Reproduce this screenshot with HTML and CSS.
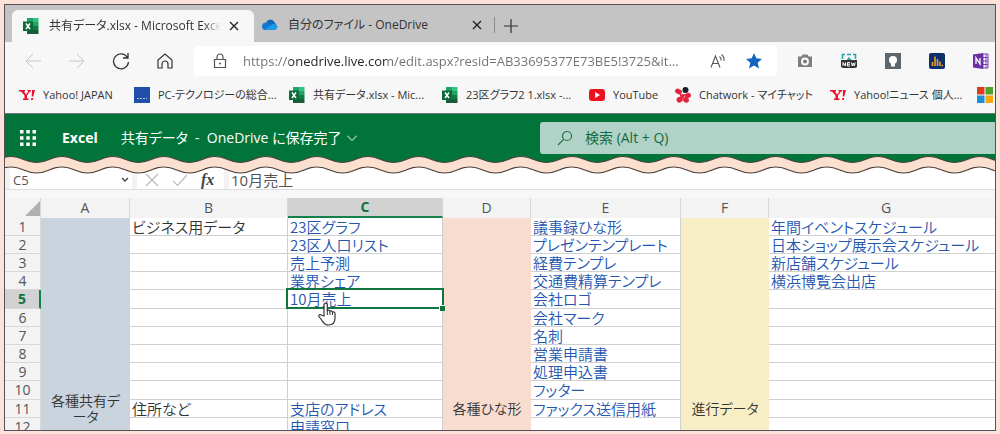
FILE: index.html
```html
<!DOCTYPE html>
<html lang="ja">
<head>
<meta charset="utf-8">
<title>共有データ.xlsx - Microsoft Excel Online</title>
<link rel="stylesheet" href="styles.css">
</head>
<body>
<svg class="defs" aria-hidden="true">
  <symbol id="excel" viewBox="0 0 16 16">
    <path d="M4 0h6v4H4z" fill="#21a366"/><path d="M10 0h5.500v4H10z" fill="#33c481"/>
    <path d="M4 4h6v4H4z" fill="#107c41"/><path d="M10 4h5.500v4H10z" fill="#21a366"/>
    <path d="M4 8h6v4H4z" fill="#185c37"/><path d="M10 8h5.500v4H10z" fill="#107c41"/>
    <path d="M4 12h11.500v4H4z" fill="#185c37"/>
    <path d="M0 3.500h10v9.500H0z" fill="#0b6a38"/>
    <path d="M3 5.500l4 5.500M7 5.500L3 11" stroke="#fff" stroke-width="1.500"/>
  </symbol>
  <symbol id="yahoo" viewBox="0 0 16 12">
    <path d="M0 1h6v1.500H5l2 3 2.500-3H8.500V1H12v1.500h-1L8 6.500V9.500h1.500V11H4V9.500h1.500V6.500L2 2.500H0zM13 1h3l-1.800 6.500h-1.500zM12.300 9h1.900l-.4 2h-1.900z" fill="#e8112d"/>
  </symbol>
  <symbol id="cross" viewBox="0 0 10 10"><path d="M1 1l8 8M9 1L1 9" stroke="currentColor" stroke-width="1.400"/></symbol>
</svg>

<div class="window">
  <div class="tabs">
    <div class="tab tab-active">
      <svg class="icon"><use href="#excel"/></svg>
      <a class="tab-title" href="#">共有データ.xlsx - Microsoft Excel Online</a>
      <button class="close" aria-label="タブを閉じる"><svg><use href="#cross"/></svg></button>
    </div>
    <div class="tab">
      <svg class="icon" viewBox="0 0 16 16"><path d="M4 6a4.500 4.500 0 0 1 8-1.500L14.500 8 9 11z" fill="#1068b8"/><path d="M0 10a4 4 0 0 1 6-4l6 3-3 4H3.500A3.500 3.500 0 0 1 0 10z" fill="#1478d0"/><path d="M6 10l5-3a4 4 0 0 1 2.500.2A3 3 0 0 1 13 13H3.500z" fill="#1d9be8"/></svg>
      <a class="tab-title" href="#">自分のファイル - OneDrive</a>
      <button class="close" aria-label="タブを閉じる"><svg><use href="#cross"/></svg></button>
    </div>
    <button class="new-tab" aria-label="新しいタブ"><svg viewBox="0 0 16 16"><path d="M8 1v14M1 8h14" stroke="#333" stroke-width="1.200"/></svg></button>
  </div>

  <div class="toolbar">
    <div class="nav">
      <button aria-label="戻る"><svg viewBox="0 0 18 18"><path d="M17 9H2M9 2L2 9l7 7" stroke="#c6c6c6"/></svg></button>
      <button aria-label="進む"><svg viewBox="0 0 18 18"><path d="M1 9h15M9 2l7 7-7 7" stroke="#c6c6c6"/></svg></button>
      <button aria-label="更新"><svg viewBox="0 0 18 18"><path d="M15.500 5.500A7.500 7.500 0 1 0 16.500 10M16 1v5h-5" stroke="#333" stroke-width="1.300"/></svg></button>
      <button aria-label="ホーム"><svg viewBox="0 0 18 18"><path d="M2 8l7-6 7 6v8h-4v-4a3 3 0 0 0-6 0v4H2z" stroke="#333" stroke-width="1.200"/></svg></button>
    </div>
    <div class="address">
      <svg class="lock" viewBox="0 0 14 16"><path d="M1.500 6.500h11v8h-11zM4 6V4a3 3 0 0 1 6 0v2" fill="none" stroke="#555" stroke-width="1.200"/><circle cx="7" cy="10.500" r="1" fill="#555"/></svg>
      <input class="url" aria-label="アドレス" value="https://onedrive.live.com/edit.aspx?resid=AB33695377E73BE5!3725&amp;it...">
      <button class="address-button" aria-label="音声で読み上げる"><svg viewBox="0 0 16 16"><path d="M1 14.500L5.500 3 10 14.500M2.700 10.500h5.600M9.500 3.500a4 4 0 0 1 1.500 4M11.500 1.500a7 7 0 0 1 2.500 6.500" stroke="#555" stroke-width="1.100"/></svg></button>
      <button class="address-button" aria-label="お気に入り"><svg viewBox="0 0 16 16"><path d="M8 0l2.300 5.300 5.700.6-4.300 3.800L13 15.500 8 12.500l-5 3 1.300-5.800L0 5.900l5.700-.6z" fill="#1266bd"/></svg></button>
    </div>
    <div class="extensions">
      <button aria-label="カメラ"><svg viewBox="0 0 16 16"><path d="M1 3.500h3.500l1-2h5l1 2H15V14H1z" fill="#7d7f82"/><circle cx="8" cy="8.500" r="3" fill="#7d7f82" stroke="#fff" stroke-width="1.800"/></svg></button>
      <button aria-label="新着"><svg viewBox="0 0 16 16"><path d="M1.500 6V1.500H4M6 1.500h4M12 1.500h2.500V6" stroke="#29a3a8" stroke-width="1.600"/><path d="M5.500 7l2.500-3 2.500 3z" fill="#29a3a8"/><path d="M0 7h16v7l-2 1H2l-2-1z" fill="#333"/><path d="M2 13V9.500l2.500 3.500V9.500M9 9.500H6.500V13H9M6.500 11.200H9M10.500 9.500l.8 3.500 1-3 1 3 .9-3.500" stroke="#fff"/></svg></button>
      <button aria-label="ヒント"><svg viewBox="0 0 16 16"><path d="M0 0h16v16H0z" fill="#5b666e"/><circle cx="8" cy="7" r="4" fill="#fff"/><path d="M6 10h4v3.500H6z" fill="#fff"/></svg></button>
      <button aria-label="統計"><svg viewBox="0 0 16 16"><rect width="16" height="16" rx="2" fill="#0a2f6b"/><path d="M3.500 13V9M6 13V3.500M8.500 13V6M11 13V8.500M12.500 12.500H14" stroke="#f29a2e" stroke-width="1.600"/></svg></button>
      <button aria-label="OneNote"><svg viewBox="0 0 16 16"><path d="M10 1h5v14h-5z" fill="#fff" stroke="#7b3fb0"/><path d="M10 4.500h5M10 8h5M10 11.500h5M13 1v14" stroke="#7b3fb0"/><path d="M0 1.500L10 0v16L0 14.500z" fill="#6b2fa5"/><path d="M3 11V5l4 6V5" stroke="#fff" stroke-width="1.300"/></svg></button>
    </div>
  </div>

  <nav class="bookmarks">
    <a href="#"><svg class="icon"><use href="#yahoo"/></svg>Yahoo! JAPAN</a>
    <a href="#"><svg class="icon" viewBox="0 0 16 16"><path d="M0 0h16v16H0z" fill="#1f4fa8"/><path d="M3 11.500h10" stroke="#a8c0ec" stroke-dasharray="2 1"/></svg>PC-テクノロジーの総合...</a>
    <a href="#"><svg class="icon"><use href="#excel"/></svg>共有データ.xlsx - Mic...</a>
    <a href="#"><svg class="icon"><use href="#excel"/></svg>23区グラフ2 1.xlsx -...</a>
    <a href="#"><svg class="icon" viewBox="0 0 16 16"><rect y="2" width="16" height="12" rx="3" fill="#e8131d"/><path d="M6.200 5v6l4.800-3z" fill="#fff"/></svg>YouTube</a>
    <a href="#"><svg class="icon" viewBox="0 0 16 16"><g fill="#e6243f"><rect x="0" y="2" width="7" height="5" rx="2.500" transform="rotate(25 3.500 4.500)"/><rect x="9.500" y="6" width="6.500" height="5" rx="2.500" transform="rotate(-20 13 8.500)"/><rect x="1.500" y="10" width="6" height="5.500" rx="2.500" transform="rotate(-30 4.500 12.500)"/><rect x="8" y="10.500" width="6" height="5" rx="2.500" transform="rotate(30 11 13)"/><path d="M4 5l6 6-4 1zM11 7.500L6 12l1-5z"/></g><circle cx="10.500" cy="3" r="3" fill="#1a1d2b"/></svg>Chatwork - マイチャット</a>
    <a href="#"><svg class="icon"><use href="#yahoo"/></svg>Yahoo!ニュース 個人...</a>
    <a href="#" aria-label="Microsoft"><svg class="icon" viewBox="0 0 16 16"><path d="M0 0h7.500v7.500H0z" fill="#e03a1e"/><path d="M8.500 0H16v7.500H8.500z" fill="#4ca22b"/><path d="M0 8.500h7.500V16H0z" fill="#1890dc"/><path d="M8.500 8.500H16V16H8.500z" fill="#f7a80d"/></svg></a>
  </nav>

  <header class="app-bar">
    <button class="launcher" aria-label="アプリ起動ツール"><svg viewBox="0 0 16 16"><path fill="#fff" d="M0 0h3.500v3.500H0zM6.300 0h3.500v3.500H6.300zM12.500 0H16v3.500h-3.500zM0 6.300h3.500v3.500H0zM6.300 6.300h3.500v3.500H6.300zM12.500 6.300H16v3.500h-3.500zM0 12.500h3.500V16H0zM6.300 12.500h3.500V16H6.300zM12.500 12.500H16V16h-3.500z"/></svg></button>
    <a class="app-name" href="#">Excel</a>
    <button class="doc-name">共有データ&nbsp; - &nbsp;OneDrive に保存完了<svg viewBox="0 0 10 6"><path d="M0 .5l5 5 5-5" stroke="#fff"/></svg></button>
    <label class="search"><svg viewBox="0 0 16 16"><circle cx="10" cy="6" r="4.500"/><path d="M6.800 9.200L1 15"/></svg><input type="text" aria-label="検索" placeholder="検索 (Alt + Q)"></label>
  </header>

  <div class="formula-bar">
    <svg class="tear" aria-hidden="true">
      <defs><pattern id="wave" width="51" height="20" patternUnits="userSpaceOnUse">
        <path class="band" d="M-45 1.500C-33 1.500-31.500 7.500-19.500 7.500S-6 1.500 6 1.500 19.500 7.500 31.500 7.500 45 1.500 57 1.500V12C45 12 43.500 18 31.500 18S18 12 6 12-7.500 18-19.500 18-33 12-45 12z"/>
        <path class="edge" d="M-45 1.500C-33 1.500-31.500 7.500-19.500 7.500S-6 1.500 6 1.500 19.500 7.500 31.500 7.500 45 1.500 57 1.500M57 12C45 12 43.500 18 31.500 18S18 12 6 12-7.500 18-19.500 18-33 12-45 12"/>
      </pattern></defs>
      <rect width="100%" height="20" fill="url(#wave)"/>
    </svg>
    <div class="name-box"><input aria-label="名前ボックス" value="C5"><button aria-label="名前の一覧"><svg viewBox="0 0 8 6"><path d="M1 1l3 3 3-3" stroke="#444" stroke-width="1.400"/></svg></button></div>
    <div class="formula-tools">
      <button aria-label="キャンセル"><svg viewBox="0 0 14 14"><path d="M1 1l12 12M13 1L1 13" stroke="#bbb" stroke-width="1.200"/></svg></button>
      <button aria-label="入力"><svg viewBox="0 0 14 14"><path d="M0 8l4.500 4.500L14 2" stroke="#bbb" stroke-width="1.200"/></svg></button>
      <button class="fx" aria-label="関数の挿入">fx</button>
    </div>
    <input class="formula" aria-label="数式バー" value="10月売上">
  </div>

  <div class="sheet">
    <table>
      <colgroup><col class="w-head"><col class="w-a"><col class="w-b"><col class="w-c"><col class="w-d"><col class="w-e"><col class="w-f"><col></colgroup>
      <thead>
        <tr><th class="corner"><svg viewBox="0 0 15 15"><path d="M15 0v15H0z" fill="#b0b0b0"/></svg></th><th>A</th><th>B</th><th class="col-on">C</th><th>D</th><th>E</th><th>F</th><th>G</th></tr>
      </thead>
      <tbody>
        <tr><th>1</th><td class="group blue" rowspan="12">各種共有デ<br>ータ</td><td>ビジネス用データ</td><td><a href="#">23区グラフ</a></td><td class="group pink" rowspan="12">各種ひな形</td><td><a href="#">議事録ひな形</a></td><td class="group yellow" rowspan="12">進行データ</td><td><a href="#">年間イベントスケジュール</a></td></tr>
        <tr><th>2</th><td></td><td><a href="#">23区人口リスト</a></td><td><a href="#">プレゼンテンプレート</a></td><td><a href="#">日本ショップ展示会スケジュール</a></td></tr>
        <tr><th>3</th><td></td><td><a href="#">売上予測</a></td><td><a href="#">経費テンプレ</a></td><td><a href="#">新店舗スケジュール</a></td></tr>
        <tr><th>4</th><td></td><td><a href="#">業界シェア</a></td><td><a href="#">交通費精算テンプレ</a></td><td><a href="#">横浜博覧会出店</a></td></tr>
        <tr><th class="row-on">5</th><td></td><td class="selected"><a href="#">10月売上</a><svg class="hand" viewBox="0 0 18 24"><path d="M6 14V2.500a1.700 1.700 0 0 1 3.300 0V9c.5-1.200 2.500-1 2.700.5.700-1 2.300-.6 2.500.7.800-.7 2.500-.2 2.500 1.300v4.500c0 4-2 7-6.500 7-4 0-5-2-6.500-4.500L1 14.500c-.6-1.500 1-2.500 2.300-1.500z" fill="#fff" stroke="#333" stroke-width="1.200"/><path d="M9.300 9v4M12 9.500V13M14.500 10.200V13" stroke="#333" fill="none"/></svg></td><td><a href="#">会社ロゴ</a></td><td></td></tr>
        <tr><th>6</th><td></td><td></td><td><a href="#">会社マーク</a></td><td></td></tr>
        <tr><th>7</th><td></td><td></td><td><a href="#">名刺</a></td><td></td></tr>
        <tr><th>8</th><td></td><td></td><td><a href="#">営業申請書</a></td><td></td></tr>
        <tr><th>9</th><td></td><td></td><td><a href="#">処理申込書</a></td><td></td></tr>
        <tr><th>10</th><td></td><td></td><td><a href="#">フッター</a></td><td></td></tr>
        <tr><th>11</th><td>住所など</td><td><a href="#">支店のアドレス</a></td><td><a href="#">ファックス送信用紙</a></td><td></td></tr>
        <tr><th>12</th><td></td><td><a href="#">申請窓口</a></td><td></td><td></td></tr>
      </tbody>
    </table>
  </div>
</div>
</body>
</html>
```

FILE: styles.css
```css
* { box-sizing: border-box; }
body {
  margin: 0;
  height: 100vh;
  padding: 4px 4px 3px;
  background: #fde2da;
  font: 13px/18px "Open Sans", "Noto Sans CJK JP", sans-serif;
  font-feature-settings: "palt";
  color: #333;
}
button, input { font: inherit; font-feature-settings: inherit; color: inherit; border: 0; padding: 0; margin: 0; background: none; outline: 0; }
button { display: flex; align-items: center; justify-content: center; flex: none; }
a { color: inherit; text-decoration: none; }
svg { flex: none; fill: none; }
.defs { position: absolute; width: 0; height: 0; }
.icon { width: 16px; height: 16px; }

.window { height: 100%; display: flex; flex-direction: column; overflow: hidden; border: 1px solid #55505a; background: #f7f7f7; }

/* Browser tabs */
.tabs { flex: none; display: flex; height: 37px; padding: 5px 0 0 7px; background: #c4c4c4; font-size: 12px; }
.tab { display: flex; align-items: center; width: 242px; padding: 0 11px; border-right: 1px solid #8a8a8a; }
.tab + .tab { width: 241px; margin: 7px 0 9px; padding: 0 8px; }
.tab-active { border: 0; border-radius: 6px 6px 0 0; background: #f7f7f7; }
.tab-title { flex: 1; min-width: 0; margin: 0 4px 0 10px; overflow: hidden; white-space: nowrap; }
.tab-active .tab-title { -webkit-mask-image: linear-gradient(90deg, #000 90%, transparent); mask-image: linear-gradient(90deg, #000 90%, transparent); }
.close { width: 18px; height: 18px; color: #222; }
.close svg { width: 10px; height: 10px; }
.new-tab { width: 32px; }
.new-tab svg { width: 16px; height: 16px; }

/* Address row */
.toolbar { flex: none; display: flex; align-items: center; height: 38px; }
.nav { display: flex; gap: 26px; padding-left: 19px; }
.nav button, .nav svg { width: 18px; height: 18px; }
.address { flex: 1; display: flex; align-items: center; height: 30px; margin-left: 20px; padding: 0 15px 0 19px; border-radius: 4px; background: #fff; }
.lock { width: 14px; height: 16px; margin-right: 16px; }
.url {
  flex: 1; min-width: 0; font-size: 13px; color: transparent;
  background: linear-gradient(90deg, #707070 46px, #222 46px 144px, #707070 144px);
  -webkit-background-clip: text; background-clip: text;
}
.address-button, .address-button svg { width: 16px; height: 16px; }
.address-button + .address-button { margin-left: 20px; }
.extensions { display: flex; gap: 28px; padding: 0 6px 0 20px; }
.extensions button, .extensions svg { width: 16px; height: 16px; }

/* Bookmarks */
.bookmarks { flex: none; display: grid; grid-template-columns: 115px 155px 153px 147px 86px 155px 147px auto; align-items: center; height: 33px; padding: 0 0 3px 14px; font-size: 11px; }
.bookmarks a { display: flex; align-items: center; gap: 8px; white-space: nowrap; }

/* Excel bar */
.app-bar { flex: none; display: flex; align-items: center; padding: 8px 0 11px 15px; border-top: 1px solid #777; background: #01743a; color: #fff; font-size: 14px; }
.launcher, .launcher svg { width: 16px; height: 16px; }
.app-name { margin-left: 26px; font-size: 14px; font-weight: 700; }
.doc-name { margin-left: 23px; gap: 5px; white-space: nowrap; }
.doc-name svg { width: 10px; height: 6px; }
.search { flex: 1; display: flex; align-items: center; gap: 12px; height: 32px; max-width: 455px; margin-left: auto; padding-left: 17px; border-radius: 3px 0 0 3px; background: #b1d2c6; }
.search svg { width: 16px; height: 16px; stroke: #22704a; stroke-width: 1.2; }
.search input { flex: 1; min-width: 0; color: #156b40; }
.search input::placeholder { color: #156b40; opacity: 1; }

/* Formula bar */
.formula-bar { flex: none; position: relative; display: flex; gap: 5px; height: 25px; margin-bottom: 8px; padding-left: 5px; border-bottom: 1px solid #dedede; background: #f2f2f2; }
.tear { position: absolute; left: 0; top: -10px; width: 100%; height: 20px; }
.band { fill: #fbdfcf; }
.edge { stroke: #4a403c; stroke-width: 1.2; }
.name-box { display: flex; align-items: center; width: 122px; padding: 5px 2px 0 3px; background: #fff; }
.name-box input { flex: 1; min-width: 0; color: #555; }
.name-box button { width: 10px; height: 10px; }
.name-box svg { width: 8px; height: 6px; }
.formula-tools { display: flex; align-items: center; gap: 14px; width: 87px; padding: 5px 0 0 8px; background: #fff; }
.formula-tools svg { width: 14px; height: 14px; }
.fx { font: italic bold 16px/18px "Liberation Serif", serif; color: #444; }
.formula { flex: 1; min-width: 0; padding: 5px 0 0 2px; background: #fff; color: #555; font-size: 15px; }

/* Grid */
.sheet { flex: 1; min-height: 0; overflow: hidden; background: #fff; }
table { width: 100%; table-layout: fixed; border-collapse: separate; border-spacing: 0; }
.w-head { width: 36px; } .w-a { width: 89px; } .w-b { width: 158px; } .w-c { width: 155px; }
.w-d { width: 88px; } .w-e { width: 150px; } .w-f { width: 88px; }
th, td { height: 18px; padding: 0; line-height: 16px; }
th { background: #f3f3f3; color: #555; font-size: 14px; font-weight: 400; border-right: 1px solid #d8d8d8; }
thead th { height: 20px; line-height: 18px; }
tbody th { border-bottom: 1px solid #d8d8d8; }
tbody tr:nth-child(5n) > * { height: 19px; }
.corner svg { display: block; width: 15px; height: 15px; margin-left: auto; }
.col-on { background: #d2d2d2; color: #0d7440; font-weight: 700; border-bottom: 2px solid #14804a; }
tbody .row-on { background: #d2d2d2; color: #0d7440; font-weight: 700; border-right: 2px solid #14804a; }
td { padding-left: 2px; border-right: 1px solid #d0d0d0; border-bottom: 1px solid #d0d0d0; font-family: "Noto Sans CJK JP", sans-serif; font-size: 15px; font-weight: 350; white-space: nowrap; }
td a { color: #2456b0; }
td:last-child, thead th:last-child { border-right: 0; }
thead th:last-child { padding-left: 8px; }
.group { vertical-align: bottom; padding: 0 0 20px; border: 0; text-align: center; font-size: 14px; }
.blue { padding-bottom: 12px; background: #cad4de; }
.pink { background: #f8dcd0; }
.yellow { background: #f8eec6; }
.selected { position: relative; }
.selected::before { content: ""; position: absolute; inset: -2px -2px -1px; border: 2px solid #11753f; }
.selected::after { content: ""; position: absolute; right: -3px; bottom: -3px; width: 5px; height: 5px; border: solid #fff; border-width: 1px 0 0 1px; background: #11753f; }
.hand { position: absolute; left: 30px; top: 12px; width: 18px; height: 24px; z-index: 1; }
```
